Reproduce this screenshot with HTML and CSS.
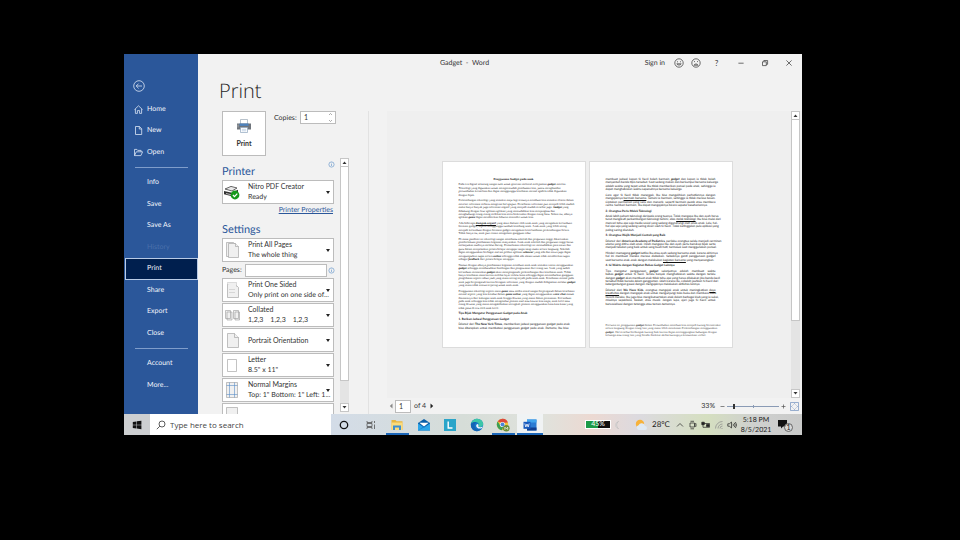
FILE: index.html
```
<!DOCTYPE html>
<html lang="en">
<head>
    <meta charset="UTF-8">
    <title>Gadget - Word</title>
    <link rel="stylesheet" href="styles.css">
</head>
<body>
<div class="app">
    <nav class="sidebar">
        <button class="back" aria-label="Back">
            <svg viewBox="0 0 12 12" width="12" height="12"><circle cx="6" cy="6" r="5.3"/><path d="M9 6H3.2M5.6 3.6L3.2 6l2.4 2.4"/></svg>
        </button>
        <div class="nav-group top">
            <a href="#"><svg viewBox="0 0 9 9" width="9" height="9"><path d="M.5 4.6L4.5.8l4 3.8M1.4 4v4.4h2V5.6h2.2v2.8h2V4"/></svg>Home</a>
            <a href="#"><svg viewBox="0 0 9 9" width="9" height="9"><path d="M1.5.5h4L7.7 2.8v5.7H1.5zM5.3.5V3h2.4"/></svg>New</a>
            <a href="#"><svg viewBox="0 0 9 9" width="9" height="9"><path d="M.5 7.6V1.4h2.4l.8 1h3.4v1.4M.5 7.6L2.3 3.8h6.3L6.9 7.6z"/></svg>Open</a>
        </div>
        <hr>
        <div class="nav-group mid">
            <a href="#">Info</a>
            <a href="#">Save</a>
            <a href="#">Save As</a>
            <a href="#" class="disabled">History</a>
            <a href="#" class="active">Print</a>
            <a href="#">Share</a>
            <a href="#">Export</a>
            <a href="#">Close</a>
        </div>
        <hr>
        <div class="nav-group bottom">
            <a href="#">Account</a>
            <a href="#">More...</a>
        </div>
    </nav>

    <div class="main">
        <header class="titlebar">
            <span class="doc-title">Gadget&nbsp; - &nbsp;Word</span>
            <a href="#" class="signin">Sign in</a>
            <button class="face" aria-label="Send a smile"><svg viewBox="0 0 10 10" width="10" height="10"><circle cx="5" cy="5" r="4.2"/><path d="M3 3.8h1M6 3.8h1M2.8 5.8c.8 1.7 3.6 1.7 4.4 0z"/></svg></button>
            <button class="face" aria-label="Send a frown"><svg viewBox="0 0 10 10" width="10" height="10"><circle cx="5" cy="5" r="4.2"/><path d="M3 3.2l1 .8M7 3.2l-1 .8M3 7.2c.8-1.7 3.2-1.7 4 0z"/></svg></button>
            <button class="help" aria-label="Help">?</button>
            <button class="win" aria-label="Minimize"><svg viewBox="0 0 8 8" width="8" height="8"><path d="M1.4 4.2h5.2"/></svg></button>
            <button class="win" aria-label="Restore"><svg viewBox="0 0 8 8" width="8" height="8"><path d="M1.5 2.8h3.8v3.8H1.5zM2.8 2.6V1.5h3.8v3.8H5.4"/></svg></button>
            <button class="win" aria-label="Close"><svg viewBox="0 0 8 8" width="8" height="8"><path d="M1.4 1.4l5.2 5.2M6.6 1.4L1.4 6.6"/></svg></button>
        </header>

        <h1>Print</h1>

        <div class="content">
            <section class="options">
                <div class="print-row">
                    <button class="print-btn">
                        <svg viewBox="0 0 16 14" width="16" height="14">
                            <path d="M4.5.5h7v5h-7z" fill="#fff" stroke="#9aa7b5" stroke-width=".7"/>
                            <path d="M1 4.5h14v6H1z" fill="#6f747b"/>
                            <path d="M3.5 4.5h9v2.4h-9z" fill="#4d82bd"/>
                            <path d="M1.5 5.5h1v3h-1z" fill="#a7abb0"/>
                            <path d="M4.5 8.5h7v5h-7z" fill="#fff" stroke="#8fa6bf" stroke-width=".7"/>
                            <path d="M5.8 10.3h4.4M5.8 11.8h4.4" stroke="#9db9d6" stroke-width=".6"/>
                        </svg>
                        Print
                    </button>
                    <label for="copies">Copies:</label>
                    <div class="spin">
                        <input id="copies" type="text" value="1">
                        <svg viewBox="0 0 5 11" width="5" height="11"><path d="M1 3l1.5-1.5L4 3M1 8l1.5 1.5L4 8"/></svg>
                    </div>
                </div>

                <div class="scroller">
                    <div class="settings">
                        <h2 class="first">Printer <svg class="info" viewBox="0 0 7 7" width="7" height="7"><circle cx="3.5" cy="3.5" r="2.6"/><path d="M3.5 3v2M3.5 1.8v.6"/></svg></h2>
                        <div class="picker">
                            <svg viewBox="0 0 18 18" width="18" height="18">
                                <path d="M2 6l6-2.6 6 1.6-5 3z" fill="#e8e8e8" stroke="#444" stroke-width=".8"/>
                                <path d="M1 8l8 1.8 6-3v3.4l-6 3-8-2z" fill="#333"/>
                                <path d="M3 10.5l6 1.4" stroke="#ddd" stroke-width=".8"/>
                                <circle cx="12" cy="12" r="4.4" fill="#16991c"/>
                                <path d="M9.9 12l1.6 1.6 2.8-3" fill="none" stroke="#fff" stroke-width="1.2"/>
                            </svg>
                            <div class="lines"><select aria-label="Printer"><option>Nitro PDF Creator</option></select><span>Ready</span></div>
                        </div>
                        <a href="#" class="props">Printer Properties</a>

                        <h2>Settings</h2>
                        <div class="picker">
                            <svg viewBox="0 0 18 18" width="18" height="18" class="sheet"><path d="M3.5 1.5h7l2 2v12h-9z"/><path d="M5.5 2.5h7l3 3v11h-10z"/><path d="M12.5 2.5v3h3"/></svg>
                            <div class="lines"><select aria-label="Page range"><option>Print All Pages</option></select><span>The whole thing</span></div>
                        </div>
                        <div class="pages-row">
                            <label for="pages">Pages:</label>
                            <input id="pages" type="text">
                            <svg class="info" viewBox="0 0 7 7" width="7" height="7"><circle cx="3.5" cy="3.5" r="2.6"/><path d="M3.5 3v2M3.5 1.8v.6"/></svg>
                        </div>
                        <div class="picker">
                            <svg viewBox="0 0 18 18" width="18" height="18" class="sheet"><path d="M4.5 3.5h8l3 3v10h-11z"/><path d="M4.5 3.5v-2h9v4M6.5 8.5h6M6.5 11.5h6" stroke-dasharray="1 1"/></svg>
                            <div class="lines"><select aria-label="Sides"><option>Print One Sided</option></select><span>Only print on one side of...</span></div>
                        </div>
                        <div class="picker">
                            <svg viewBox="0 0 18 18" width="18" height="18" class="sheet"><path d="M2.5 4.5h5v8h-5zM4 6h5v8H4zM10.5 4.5h5v8h-5zM12 6h4.5v8H12z"/></svg>
                            <div class="lines"><select aria-label="Collation"><option>Collated</option></select><span class="sets"><i>1,2,3</i><i>1,2,3</i><i>1,2,3</i></span></div>
                        </div>
                        <div class="picker">
                            <svg viewBox="0 0 18 18" width="18" height="18" class="sheet"><path d="M4.5 2.5h7l4 4v10h-11z"/><path d="M11.5 2.5v4h4"/></svg>
                            <div class="lines"><select aria-label="Orientation"><option>Portrait Orientation</option></select></div>
                        </div>
                        <div class="picker">
                            <svg viewBox="0 0 18 18" width="18" height="18" class="sheet blank"><path d="M4.5 3.5h9v12h-9z"/></svg>
                            <div class="lines"><select aria-label="Paper size"><option>Letter</option></select><span>8.5" x 11"</span></div>
                        </div>
                        <div class="picker">
                            <svg viewBox="0 0 18 18" width="18" height="18" class="sheet"><path d="M3.5 1.5h11v15h-11z"/><path class="guide" d="M6.5 1.5v15M11.5 1.5v15M3.5 4.5h11M3.5 13.5h11"/></svg>
                            <div class="lines"><select aria-label="Margins"><option>Normal Margins</option></select><span>Top: 1" Bottom: 1" Left: 1...</span></div>
                        </div>
                        <div class="picker">
                            <svg viewBox="0 0 18 18" width="18" height="18" class="sheet"><path d="M3.5 1.5h11v15h-11z"/></svg>
                            <div class="lines low"><select aria-label="Pages per sheet"><option>1 Page Per Sheet</option></select></div>
                        </div>
                    </div>
                    <div class="scrollbar short">
                        <button aria-label="Scroll up"><svg viewBox="0 0 5 3" width="5" height="3"><path d="M.5 3l2-2.500 2 2.500z"/></svg></button>
                        <div class="thumb"></div>
                        <button aria-label="Scroll down"><svg viewBox="0 0 5 3" width="5" height="3"><path d="M.5 0l2 2.500 2-2.500z"/></svg></button>
                    </div>
                </div>
            </section>

            <section class="preview">
                <div class="canvas">
                    <div class="sheets">
                        <article class="page serif" lang="id">
                            <p class="center"><b>Penggunaan Gadget pada anak</b></p>
                            <p>Pada era digital sekarang sangat sulit untuk generasi milenial melepaskan <b><i>gadget</i></b> mereka.<br>Teknologi yang digunakan untuk mempermudah pembuatan kita, justru menghambat<br>pertumbuhan kreatifitas dan dapat mengganggu kesehatan mental apabila tidak digunakan<br>dengan bijak.</p>
                            <p>Perkembangan teknologi yang semakin maju lagi tentunya membuat kita semakin efisien dalam<br>mencari informasi terbaru mengenai hal apapun. Persebaran informasi pun menjadi lebih mudah<br>maka hanya banyak juga informasi negatif yang menjadi mudah tersebar juga. <b><i>Gadget</i></b> yang<br>didukung dengan fitur aplikasi-aplikasi yang memudahkan kita menjangkau dan<br>menghubungi orang-orang terdekat kita serta berkenalan dengan orang baru. Selain itu, adanya<br>aplikasi <b><i>game</i></b> dapat memberikan hiburan tersendiri untuk kita.</p>
                            <p>Ada beberapa <b><u>dampak negatif</u></b> yang akan dialami oleh anak-anak yang mengalami kecanduan<br>bermain gadget, seperti mengganggu tumbuh kembang anak. Anak-anak yang lebih sering<br>menjadi kecanduan dengan bermain gadget mengalami keterlambatan perkembangan bicara.<br>Tidak hanya itu, anak pun rentan mengalami gangguan tidur.</p>
                            <p>Di masa pandemi ini teknologi sangat membantu sekolah dan perguruan tinggi dikarenakan<br>pemberlakuan pembatasan kegiatan masyarakat. Anak-anak sekolah dan perguruan tinggi harus<br>melanjutkan studinya melalui daring. Pemanfaatan teknologi ini memudahkan para siswa dan<br>guru dalam menjalankan proses belajar mengajar tanpa tatap muka secara langsung. Sekolah<br>dapat menggunakan berbagai macam pilihan aplikasi <b><i>selancar</i></b> yang ada dan siswa juga dapat<br>mengumpulkan tugas secara <b><i>online</i></b> sehingga tidak ada alasan untuk tidak memberikan tugas<br>sebagai <b><i>feedback</i></b> dari proses belajar mengajar.</p>
                            <p>Namun dengan adanya pembatasan kegiatan membuat anak-anak semakin intens menggunakan<br><b><i>gadget</i></b> sehingga membutuhkan bimbingan dan pengawasan dari orang tua. Anak yang sudah<br>kecanduan memainkan <b><i>gadget</i></b> akan mempengaruhi perkembangan dan kesehatan anak. Tidak<br>hanya kesehatan mata karena melihat layar terlalu lama sehingga dapat menimbulkan gangguan<br>penglihatan seperti rabun jauh yang mana sering terjadi pada anak-anak. Kesehatan mental pada<br>anak juga berpengaruh karena beragam informasi yang dengan mudah didapatkan melalui <b><i>gadget</i></b><br>yang mana tidak semua terjaring untuk anak-anak.</p>
                            <p>Penggunaan teknologi seperti main <b><i>game</i></b> atau media sosial sangat berpengaruh dalam kesehatan<br>mental seperti yang kita ketahui dalam <b><i>game online</i></b> yang dapat menggunakan <b><i>voice chat</i></b> masuk<br>diantaranya dari kalangan anak-anak hingga dewasa yang mana dalam permainan. Kecanduan<br>pada anak sehingga kita tidak mengetahui pemain asal atau kawan kita siapa, anak kecil atau<br>orang dewasa yang mana mengakibatkan seringkali pemain menggunakan kata-kata kasar yang<br>tidak patut di tiru oleh anak kecil.</p>
                            <p class="sans"><b>Tips Bijak Mengatur Penggunaan Gadget pada Anak</b></p>
                            <p class="sans"><b>1. Berikan Jadwal Penggunaan Gadget</b></p>
                            <p class="sans justify">Dilansir dari <b>The New York Times</b>, memberikan jadwal penggunaan gadget pada anak<br>bisa diterapkan untuk membatasi penggunaan <i>gadget</i> pada anak. Pertama, Ibu bisa</p>
                        </article>
                        <article class="page sans" lang="id">
                            <p class="justify">membuat jadwal kapan Si Kecil boleh bermain <b><i>gadget</i></b> dan kapan ia tidak boleh<br>menyentuh benda tipis tersebut. Saat sedang makan dan berkumpul bersama keluarga<br>adalah waktu yang tepat untuk Ibu tidak memberikan ponsel pada anak, sehingga ia<span>dapat menghabiskan waktu sepenuhnya bersama keluarga.</span></p>
                            <p class="justify">Cara agar Si Kecil tidak merengek, Ibu bisa mengalihkan perhatiannya dengan<br>mengajaknya <u>bermain bersama</u>. Temani ia bermain, sehingga ia tidak merasa bosan.<br>Ciptakan permainan yang seru dan menarik, seperti bermain <i>puzzle</i> atau membaca<span>cerita. Sembari bermain, Ibu dapat mengajaknya bicara seputar kesehariannya.</span></p>
                            <p><b>2. Orangtua Perlu Melek Teknologi</b></p>
                            <p class="justify">Anak lebih paham teknologi daripada orang tuanya. Tidak mengapa Ibu dan ayah harus<br>turut mengikuti perkembangan teknologi terkini, alias <i><u>melek teknologi</u></i>. Ibu bisa mulai dari<br>mencari tahu apa saja media sosial yang sedang digandrungi oleh anak-anak. Lalu, hal-<br>hal apa saja yang sedang sering dicari oleh Si Kecil. Tidak ketinggalan pula aplikasi yang<span>paling sering diunduh.</span></p>
                            <p><b>3. Orangtua Wajib Menjadi Contoh yang Baik</b></p>
                            <p class="justify">Dilansir dari <b>American Academy of Pediatrics</b>, perilaku orangtua selalu menjadi cerminan<br>utama yang ditiru oleh anak. Inilah mengapa Ibu dan ayah perlu bersikap bijak serta<span>menjadi teladan yang baik untuk sang buah hati, termasuk saat menggunakan ponsel.</span></p>
                            <p class="justify">Hindari memegang <b><i>gadget</i></b> ketika Ibu atau ayah sedang bersama anak, karena akhirnya<br>hal ini membuat mereka merasa diabaikan. Sebaiknya ganti penggunaan gadget<span>saat bersama anak-anak dengan melakukan <u>kegiatan bersama</u> yang menyenangkan.</span></p>
                            <p><b>4. Isi Waktu dengan Kegiatan Bebas Gadget Lainnya</b></p>
                            <p class="justify">Tips mengatur penggunaan <b><i>gadget</i></b> selanjutnya adalah membuat waktu<br>bebas <b><i>gadget</i></b> untuk Si Kecil. Terlalu banyak menghabiskan waktu dengan terlalu<br>dengan <b><i>gadget</i></b> akan membuat anak tidak tahu apa yang harus dilakukan jika benda kecil<br>tersebut tidak berada dalam genggaman. Oleh karena itu, cobalah jauhkan Si Kecil dari<span>ketergantungan gawai dengan mengajaknya melakukan aktivitas lainnya.</span></p>
                            <p class="justify">Dilansir dari <b>We Have Kids</b>, orangtua mengajak anak untuk meningkatkan <u>daya</u><br><u>kreativitas</u> dengan mengajak anak untuk mengunjungi toko buku dan membaca buku<br>favorit mereka. Ibu juga bisa mengikutsertakan anak dalam berbagai klub yang ia sukai,<br>misalnya sepakbola, basket, atau musik. Jangan lupa, ajari juga Si Kecil untuk<span>bersosialisasi dengan tetangga atau teman-temannya.</span></p>
                            <p class="serif note">Percuma ini penggunaan <b><i>gadget</i></b> dalam Pertumbuhan membuat kita menjadi kurang berinteraksi<br>secara langsung dengan orang lain yang mana lebih menikmati Perkembangan menggunakan<br><b><i>gadget</i></b>. Hal tersebut berdampak kurang baik karena dapat merenggangkan hubungan dengan<br>keluarga atau orang lain yang berada disekitar akibat kurangnya komunikasi verbal.</p>
                        </article>
                    </div>
                    <div class="scrollbar">
                        <button aria-label="Scroll up"><svg viewBox="0 0 5 3" width="5" height="3"><path d="M.5 3l2-2.500 2 2.500z"/></svg></button>
                        <div class="thumb"></div>
                        <button aria-label="Scroll down"><svg viewBox="0 0 5 3" width="5" height="3"><path d="M.5 0l2 2.500 2-2.500z"/></svg></button>
                    </div>
                </div>
                <div class="statusbar">
                    <button class="step" aria-label="Previous page"><svg viewBox="0 0 4 6" width="4" height="6"><path fill="#888" d="M3.500.5v5L.8 3z"/></svg></button>
                    <input class="page-no" type="text" value="1" aria-label="Current page">
                    <span class="of">of 4</span>
                    <button class="step" aria-label="Next page"><svg viewBox="0 0 4 6" width="4" height="6"><path fill="#222" d="M.5.5v5L3.200 3z"/></svg></button>
                    <span class="percent">33%</span>
                    <button class="zoom-btn" aria-label="Zoom out"><svg viewBox="0 0 5 5" width="5" height="5"><path d="M.5 2.5h4"/></svg></button>
                    <input class="zoom" type="range" min="0" max="100" value="12" aria-label="Zoom">
                    <button class="zoom-btn" aria-label="Zoom in"><svg viewBox="0 0 5 5" width="5" height="5"><path d="M.5 2.5h4M2.5.5v4"/></svg></button>
                    <button class="fit" aria-label="Zoom to page"><svg viewBox="0 0 9 9" width="9" height="9"><path d="M.5.5h8v8h-8z"/><path d="M3.5 2.5l1-1 1 1M3.5 6.5l1 1 1-1M2.5 3.500l-1 1 1 1M6.5 3.500l1 1-1 1"/></svg></button>
                </div>
            </section>
        </div>
    </div>
</div>

<footer class="taskbar">
    <button class="start" aria-label="Start"><svg viewBox="0 0 10 10" width="10" height="10"><path d="M.8 1.900l3.600-.5v3.300H.8zM4.900 1.300L9.400.7v4H4.900zM.8 5.200h3.600v3.300L.8 8zM4.900 5.200h4.500v4l-4.500-.6z"/></svg></button>
    <label class="search">
        <svg viewBox="0 0 10 10" width="10" height="10"><circle cx="6" cy="4" r="3"/><path d="M3.800 6.200L.8 9.200"/></svg>
        <input type="text" placeholder="Type here to search" aria-label="Search">
    </label>
    <div class="apps">
        <button aria-label="Cortana"><svg viewBox="0 0 14 14" width="14" height="14"><circle cx="7" cy="7" r="3.7" fill="none" stroke="#111" stroke-width="1.3"/></svg></button>
        <button aria-label="Task view"><svg viewBox="0 0 14 14" width="14" height="14"><path d="M3 3v1.500h5V3M3 11V9.500h5V11M3 5.500h5v3H3zM10.500 3v2M10.500 6.500V11" fill="none" stroke="#555" stroke-width=".8"/></svg></button>
        <button class="open" aria-label="File Explorer"><svg viewBox="0 0 14 14" width="14" height="14"><path d="M1.500 2h4l1 1.300h6V12h-11z" fill="#e9b63f"/><path d="M1.500 4.500h11V12h-11z" fill="#fbdb7c"/><path d="M3 12V7.500h8V12H9V9.600H5V12z" fill="#3f8fd0"/></svg></button>
        <button aria-label="Mail"><svg viewBox="0 0 14 14" width="14" height="14"><path d="M1 5l6-4 6 4v7.500H1z" fill="#0a5fa8"/><path d="M2.300 4.800h9.400L7 8.500z" fill="#fff"/><path d="M1 5.500l6 4 6-4v7H1z" fill="#2ba5e8"/><path d="M1 12.500l6-4.600 1 1z" fill="#1683d0"/></svg></button>
        <button aria-label="Launcher"><svg viewBox="0 0 14 14" width="14" height="14"><path d="M1 1h12v12H1z" fill="#2aa5c9"/><path d="M5.200 3.500V10H9.500" fill="none" stroke="#fff" stroke-width="1.4"/></svg></button>
        <button aria-label="Edge"><svg viewBox="0 0 14 14" width="14" height="14"><circle cx="7" cy="7" r="6.2" fill="#1576c8"/><path d="M1 6C1.800 2.300 4.500.8 7 .8c4 0 6.200 2.900 6.200 5.200 0 2-1.500 3-3.200 3-1.400 0-2-.7-1.500-1.300C9.500 5.800 8 4.300 6 4.300 3.700 4.300 1.800 5.200 1 6z" fill="#3cc6a8"/><path d="M1 6c1.500-2 4-2.400 5.700-1.500C4.500 5 4 7.500 5 9.500c.8 1.700 3.500 2.600 6 1.600-2.300 3-6.500 2.300-8.200.5C1.200 10 .7 8 1 6z" fill="#1464b4"/><path d="M8.500 7.500c-.6 1 0 1.700 1.500 1.700 1.200 0 2.200-.4 2.800-1l-.8 1.900c-2.600 1.200-5.800.3-5.800-2.300 0-1 .8-1.800 1.500-1.800.6.300 1 .9.800 1.500z" fill="#f0f6fa"/></svg></button>
        <button class="open" aria-label="Chrome"><svg viewBox="0 0 14 14" width="14" height="14"><circle cx="6.5" cy="6.5" r="5.7" fill="#f3c437"/><path d="M1.600 3.600A5.700 5.700 0 0 1 11.900 4.500L6.500 5z" fill="#dc4a3c"/><path d="M1.600 3.600A5.700 5.700 0 0 0 6 12.200L7.500 8 4 7z" fill="#3c9e57"/><circle cx="6.5" cy="6.5" r="2.6" fill="#fff"/><circle cx="6.5" cy="6.5" r="2" fill="#4a86d8"/><circle cx="10.3" cy="10.3" r="3.3" fill="#6b8e3a"/><path d="M8.900 11.800V9.200l1.400 1.500 1.400-1.500v2.600" fill="none" stroke="#fff" stroke-width=".7"/></svg></button>
        <button class="open current" aria-label="Word"><svg viewBox="0 0 14 14" width="14" height="14"><path d="M4 1.500h9.500v11H4z" fill="#2b7cd3"/><path d="M4 1.500h9.500v3H4z" fill="#41a5ee"/><path d="M4 9.500h9.500v3H4z" fill="#103f91"/><path d="M.5 3.800h7v7h-7z" fill="#185abd"/><path d="M1.800 5.500l1 3.500L4 6l1.200 3 1-3.500" fill="none" stroke="#fff" stroke-width=".8"/></svg></button>
    </div>
    <div class="tray">
        <span class="battery">45%</span>
        <svg class="moon" viewBox="0 0 6 10" width="6" height="10"><path d="M4.500 1.500C2 3 2 7 4.500 8.500 1 8 .8 2.500 4.500 1.500z" fill="#fff" stroke="#aaa" stroke-width=".5"/></svg>
        <svg class="weather" viewBox="0 0 14 12" width="14" height="12"><circle cx="6" cy="5" r="4.2" fill="#f7b23b"/><path d="M4.500 11a2.500 2.500 0 0 1 0-4.800A3.500 3.500 0 0 1 11 7a2 2 0 0 1 0 4z" fill="#dfeaf5"/></svg>
        <span class="temp">28°C</span>
        <svg class="tray-icon" viewBox="0 0 10 10" width="10" height="10"><path d="M2 6.500l3-3 3 3"/></svg>
        <svg class="tray-icon" viewBox="0 0 10 10" width="10" height="10"><path d="M2 3h4.500v4H2zM6.500 4.300L8 3.500v3l-1.500-.8M2.500 1.300h3.500M2.500 8.800h3.500"/></svg>
        <svg class="tray-icon" viewBox="0 0 10 10" width="10" height="10"><path d="M2 3.500h6.500v3.800H2z"/><path d="M5.500 4.500H8v2H5.500zM.8 2.200h2.500v2.500H.8z" fill="#222"/></svg>
        <svg class="tray-icon faint" viewBox="0 0 10 10" width="10" height="10"><path d="M1.500 8.500A7 7 0 0 1 8.500 1.500M4 8.500A4.500 4.500 0 0 1 8.500 4M6 8.500A2.500 2.500 0 0 1 8.500 6M8.500 8.500h-1"/></svg>
        <svg class="tray-icon" viewBox="0 0 10 10" width="10" height="10"><path d="M.8 3.800h1.500L4.500 2v6L2.300 6.200H.8zM6 3.800q1 1.200 0 2.400M7.200 2.800q2 2.200 0 4.400M8.400 2q2.400 3 0 6"/></svg>
        <time class="clock">5:18 PM<br>8/5/2021</time>
        <button class="notify" aria-label="Notifications"><svg viewBox="0 0 14 14" width="14" height="14"><path d="M1 2h9v6.500H6L4 10.500v-2H1z" fill="#111"/></svg><span>1</span></button>
    </div>
</footer>
</body>
</html>
```
FILE: styles.css
```
* { box-sizing: border-box; }
body { margin: 0; height: 100vh; padding: 54px 158px 105px 124px; background: #000; color: #333; font-family: Lato, "Open Sans", sans-serif; font-size: 7px; line-height: 11px; display: flex; flex-direction: column; overflow: hidden; text-rendering: geometricPrecision; }
button, input, select { font: inherit; color: inherit; margin: 0; padding: 0; border: none; background: none; border-radius: 0; }
button { display: flex; align-items: center; justify-content: center; }
input { min-width: 0; outline: none; }
a { color: inherit; text-decoration: none; }
svg { flex: none; }

.app { flex: 1; min-height: 0; display: flex; background: #f2f2f2; }

/* sidebar */
.sidebar { width: 74px; flex: none; background: #2b579a; color: #f0f4fb; display: flex; flex-direction: column; padding-top: 25px; }
.sidebar svg { fill: none; stroke: #dce6f5; stroke-width: .8; }
.back { width: 12px; height: 13px; margin-left: 9px; margin-bottom: 7px; }
.nav-group { display: grid; grid-auto-rows: 1fr; flex: none; }
.nav-group.top { height: 64px; }
.nav-group.mid { height: 172px; }
.nav-group.bottom { height: 43px; }
.nav-group a { display: flex; align-items: center; gap: 4px; padding-left: 23px; }
.nav-group.top a { padding-left: 10px; }
.nav-group a.disabled { color: #4a70ab; }
.nav-group a.active { margin-left: 1px; padding-left: 21px; background: #001f4e; border: 1px solid #b9cbe6; }
hr { width: 53px; height: 1px; margin: 4px 0 4px 11px; border: none; background: #7f9dcb; flex: none; }

/* title bar */
.main { flex: 1; min-width: 0; display: flex; flex-direction: column; }
.titlebar { height: 18px; display: flex; align-items: center; padding-right: 1px; }
.titlebar svg { fill: none; stroke: #333; stroke-width: .7; }
.doc-title { margin-left: 242px; margin-right: auto; }
.signin { margin-right: 5px; }
.face { width: 17px; height: 17px; }
.help { width: 25px; font-size: 8px; }
.win { width: 24px; height: 17px; }
h1 { margin: 0; padding-left: 21px; height: 39px; line-height: 37px; font-family: "Open Sans", sans-serif; font-size: 20px; font-weight: 300; color: #262626; }
.content { flex: 1; min-height: 0; display: flex; }

/* options column */
.options { width: 171px; flex: none; padding-left: 24px; border-right: 1px solid #e2e2e2; display: flex; flex-direction: column; }
.print-row { display: flex; align-items: flex-start; height: 47px; }
.print-btn { width: 44px; height: 45px; flex-direction: column; gap: 5px; background: #fff; border: 1px solid #bcbcbc; font-weight: 700; }
.print-row label { margin-left: 8px; width: 26px; line-height: 14px; }
.spin { display: flex; align-items: center; width: 36px; height: 13px; background: #fff; border: 1px solid #bcbcbc; padding: 0 2px 0 3px; }
.spin input { flex: 1; height: 11px; }
.spin svg { fill: none; stroke: #777; stroke-width: .6; }
.scroller { flex: 1; min-height: 0; display: flex; }
.settings { width: 113px; overflow: hidden; margin-right: 5px; }
h2 { display: flex; justify-content: space-between; align-items: center; margin: 0; height: 16px; font-size: 11px; line-height: 16px; font-weight: 400; color: #2b579a; }
h2.first { height: 22px; padding-top: 5px; }
h2.first .info { margin-bottom: 14px; }
.info { fill: none; stroke: #5b8fc7; stroke-width: .6; }
.picker { position: relative; display: flex; align-items: center; width: 112px; height: 24px; margin-bottom: 1px; background: #fff; border: 1px solid #bcbcbc; }
.picker::after { content: ""; position: absolute; right: 3px; top: 10px; border: 2px solid transparent; border-top: 3px solid #222; border-bottom: none; }
.lines { flex: 1; min-width: 0; padding-left: 7px; display: flex; flex-direction: column; }
.lines select { appearance: none; width: 100%; height: 11px; line-height: 11px; outline: none; }
.lines.low { padding-top: 4px; }
.lines span { white-space: nowrap; }
.sets { display: flex; gap: 7px; }
.sets i { font-style: normal; }
.sheet { fill: #f0f0f0; stroke: #9a9a9a; stroke-width: .6; }
.sheet.blank { fill: #fff; }
.sheet .guide { fill: none; stroke: #5b8fc7; }
.props { display: block; width: 111px; height: 17px; line-height: 11px; text-align: right; color: #2b579a; text-decoration: underline; }
.pages-row { display: flex; align-items: center; height: 14px; margin-bottom: 1px; }
.pages-row label { width: 23px; }
.pages-row input { flex: 1; height: 13px; background: #fff; border: 1px solid #bcbcbc; margin-right: 1px; }

.scrollbar { width: 9px; flex: none; display: flex; flex-direction: column; background: #e4e4e4; }
.scrollbar button { height: 9px; flex: none; background: #fff; border: 1px solid #c6c6c6; fill: #333; }
.scrollbar .thumb { flex: 1; background: #fff; border: 1px solid #c6c6c6; border-top: none; }
.scrollbar.short { margin-bottom: 2px; }
.scrollbar.short .thumb { margin-bottom: 22px; }

/* preview */
.preview { flex: 1; min-width: 0; margin-left: 18px; display: flex; flex-direction: column; }
.canvas { flex: 1; min-height: 0; display: flex; background: #efefef; padding-right: 2px; }
.canvas .thumb { margin-bottom: 68px; }
.sheets { flex: 1; display: flex; align-items: center; justify-content: center; gap: 3px; padding-right: 4px; }
.page { width: 144px; height: 187px; flex: none; background: #fff; border: 1px solid #dcdcdc; padding: 16px 16px 0; font-size: 3px; line-height: 1.15; color: #111; white-space: nowrap; }
.page p { margin: 0 0 2px; }
.page .center { text-align: center; }
.serif { font-family: "Liberation Serif", serif; }
.sans { font-family: "Liberation Sans Narrow", Lato, sans-serif; }
.justify { text-align: justify; text-align-last: justify; }
.justify span { display: block; text-align-last: left; }
.page .note { margin-top: 18px; color: #333; }

.statusbar { height: 16px; display: flex; align-items: center; padding-right: 3px; }
.step { width: 8px; height: 12px; }
.page-no { width: 16px; height: 13px; background: #fff; border: 1px solid #bcbcbc; padding-left: 3px; }
.of { padding: 0 2px 0 3px; }
.percent { margin-left: auto; margin-right: 4px; }
.zoom-btn { width: 7px; stroke: #555; stroke-width: .7; }
.zoom { appearance: none; width: 52px; height: 9px; margin: 0 1px; background: linear-gradient(#8a9bb5, #8a9bb5) center / 100% 1px no-repeat, linear-gradient(#8a9bb5, #8a9bb5) center / 1px 3px no-repeat; }
.zoom::-webkit-slider-thumb { appearance: none; width: 2px; height: 5px; background: #333; }
.fit { margin-left: 3px; fill: none; stroke: #5b7fb5; stroke-width: .6; }

/* taskbar */
.taskbar { height: 21px; flex: none; display: flex; background: linear-gradient(90deg, #d3dce8 30%, #d6ddd8 50%, #e0e2dc 62%, #ecd9d2 69%, #dcdadf 76%, #d5dfc0 86%, #cfd0cf 93%, #c9cac9); color: #222; }
.start { width: 26px; background: #cdcfd1; fill: #111; }
.search { flex: 1; display: flex; align-items: center; gap: 4px; padding-left: 6px; background: #fff; fill: none; stroke: #333; stroke-width: .8; }
.search input { flex: 1; height: 15px; font-family: "Open Sans", sans-serif; font-size: 8px; }
.search input::placeholder { color: #444; opacity: 1; }
.apps { display: grid; grid-template-columns: repeat(8, 1fr); width: 212px; }
.apps button { height: 21px; }
.apps .open { border-bottom: 2px solid #1b66b8; margin: 0 2px; padding-top: 2px; }
.apps .current { background: #f0f3f4; margin: 0; }
.tray { display: flex; align-items: center; width: 259px; padding-left: 42px; }
.battery { width: 26px; height: 9px; border: 1px solid #fff; background: linear-gradient(90deg, #1d9a48 50%, #111 50%); color: #fff; text-align: center; line-height: 7px; }
.moon { margin-left: 3px; }
.weather { margin-left: 14px; }
.temp { font-size: 8px; width: 27px; padding-left: 4px; }
.tray-icon { fill: none; stroke: #222; stroke-width: .7; margin-right: 3px; }
.tray-icon.faint { stroke: #888; }
.clock { flex: 1; text-align: center; line-height: 10px; }
.notify { position: relative; width: 24px; height: 21px; margin-right: 6px; }
.notify span { position: absolute; left: 12px; top: 9px; width: 9px; height: 9px; border: 1px solid #666; border-radius: 5px; background: #d8d8d8; line-height: 7px; }
```
